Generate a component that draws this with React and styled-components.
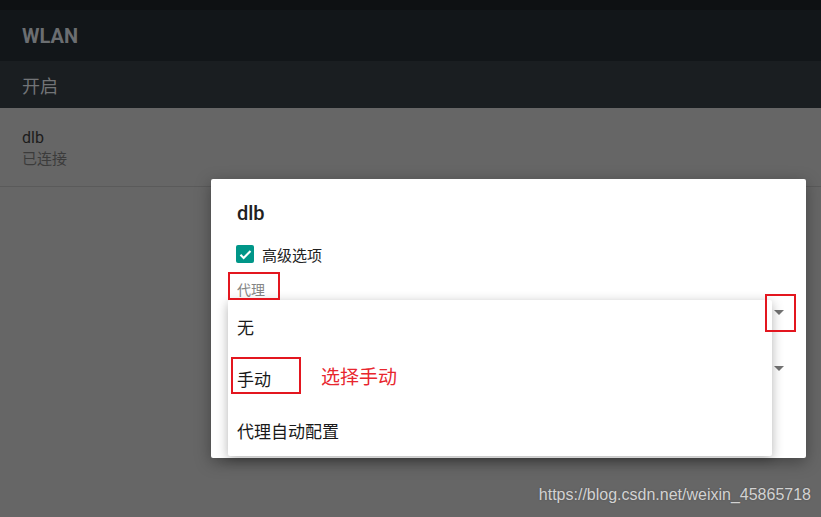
import React from "react";
import styled, { createGlobalStyle } from "styled-components";

const Global = createGlobalStyle`
  html, body {
    margin: 0;
    padding: 0;
  }
  body {
    font-family: Roboto, "Noto Sans CJK SC", sans-serif;
  }
`;

const Screen = styled.div`
  position: relative;
  width: 821px;
  height: 517px;
  overflow: hidden;
  background: #666666;
  display: flex;
  flex-direction: column;
`;

const StatusBar = styled.div`
  height: 10px;
  background: #0e1113;
`;

const Toolbar = styled.header`
  height: 51px;
  background: #121619;
  display: flex;
  align-items: center;
  padding: 0 22px;
  font-size: 20px;
  font-weight: 700;
  color: #6b6e71;
`;

const SubHeader = styled.div`
  height: 47px;
  background: #1a1e21;
  display: flex;
  align-items: center;
  padding: 0 22px;
  font-size: 18px;
  color: #727477;
`;

const ListItem = styled.div`
  height: 79px;
  border-bottom: 1px solid #5a5a5a;
  padding: 20px 22px 0;
  box-sizing: border-box;
  display: flex;
  flex-direction: column;
`;

const ItemTitle = styled.div`
  font-size: 16px;
  line-height: 20px;
  color: #1c1c1c;
`;

const ItemSub = styled.div`
  font-size: 15px;
  line-height: 22px;
  color: #3b3b3b;
`;

const Dialog = styled.div`
  position: absolute;
  left: 211px;
  top: 179px;
  width: 595px;
  height: 279px;
  box-sizing: border-box;
  background: #fff;
  border-radius: 2px;
  box-shadow: 0 4px 16px rgba(0, 0, 0, 0.35);
  padding: 22px 22px 0 26px;
  display: flex;
  flex-direction: column;
`;

const DialogTitle = styled.div`
  font-size: 20px;
  line-height: 24px;
  font-weight: 500;
  color: #212121;
`;

const CheckRow = styled.div`
  margin-top: 17px;
  height: 24px;
  display: flex;
  align-items: center;
  gap: 8px;
  font-size: 15px;
  color: #212121;
`;

const Check = styled.div`
  width: 18px;
  height: 18px;
  border-radius: 2px;
  background: #009688;
  display: flex;
  align-items: center;
  justify-content: center;
  margin-left: -1px;
`;

const FieldLabel = styled.div`
  margin-top: 14px;
  font-size: 14px;
  line-height: 20px;
  color: #858585;
`;

const Spinner = styled.div`
  margin-top: ${(p) => p.$gap}px;
  height: 24px;
  display: flex;
  align-items: center;
  justify-content: flex-end;
`;

const Arrow = styled.div`
  width: 0;
  height: 0;
  border-left: 5px solid transparent;
  border-right: 5px solid transparent;
  border-top: 5px solid #737373;
`;

const Popup = styled.ul`
  position: absolute;
  left: 228px;
  top: 300px;
  width: 544px;
  margin: 0;
  padding: 0;
  list-style: none;
  background: #fff;
  border-radius: 2px;
  box-shadow: 0 3px 12px rgba(0, 0, 0, 0.3);
`;

const Option = styled.li`
  height: 52px;
  display: flex;
  align-items: center;
  padding-left: 9px;
  font-size: 17px;
  color: #1a1a1a;
`;

const Mark = styled.div`
  position: absolute;
  left: ${(p) => p.$x}px;
  top: ${(p) => p.$y}px;
  width: ${(p) => p.$w}px;
  height: ${(p) => p.$h}px;
  box-sizing: border-box;
  border: 2px solid #e3161f;
`;

const Note = styled.div`
  position: absolute;
  left: 321px;
  top: 366px;
  font-size: 19px;
  line-height: 24px;
  color: #e8262e;
`;

const Watermark = styled.div`
  position: absolute;
  right: 10px;
  top: 486px;
  font-family: "Liberation Sans", Arial, sans-serif;
  font-size: 16px;
  color: #d2d2d2;
  text-shadow: 0 0 2px rgba(0, 0, 0, 0.25);
`;

export default function App() {
  return (
    <>
      <Global />
      <Screen>
        <StatusBar />
        <Toolbar>WLAN</Toolbar>
        <SubHeader>开启</SubHeader>
        <ListItem>
          <ItemTitle>dlb</ItemTitle>
          <ItemSub>已连接</ItemSub>
        </ListItem>

        <Dialog>
          <DialogTitle>dlb</DialogTitle>
          <CheckRow>
            <Check>
              <svg width="15" height="15" viewBox="0 0 24 24">
                <path
                  d="M4 12.5l5 5L20 6.5"
                  fill="none"
                  stroke="#fff"
                  strokeWidth="3.4"
                />
              </svg>
            </Check>
            高级选项
          </CheckRow>
          <FieldLabel>代理</FieldLabel>
          <Spinner $gap={0}>
            <Arrow />
          </Spinner>
          <Spinner $gap={32}>
            <Arrow />
          </Spinner>
        </Dialog>

        <Popup>
          <Option>无</Option>
          <Option>手动</Option>
          <Option>代理自动配置</Option>
        </Popup>

        <Mark $x={228} $y={272} $w={52} $h={28} />
        <Mark $x={765} $y={294} $w={31} $h={38} />
        <Mark $x={231} $y={357} $w={70} $h={37} />
        <Note>选择手动</Note>

        <Watermark>https://blog.csdn.net/weixin_45865718</Watermark>
      </Screen>
    </>
  );
}
